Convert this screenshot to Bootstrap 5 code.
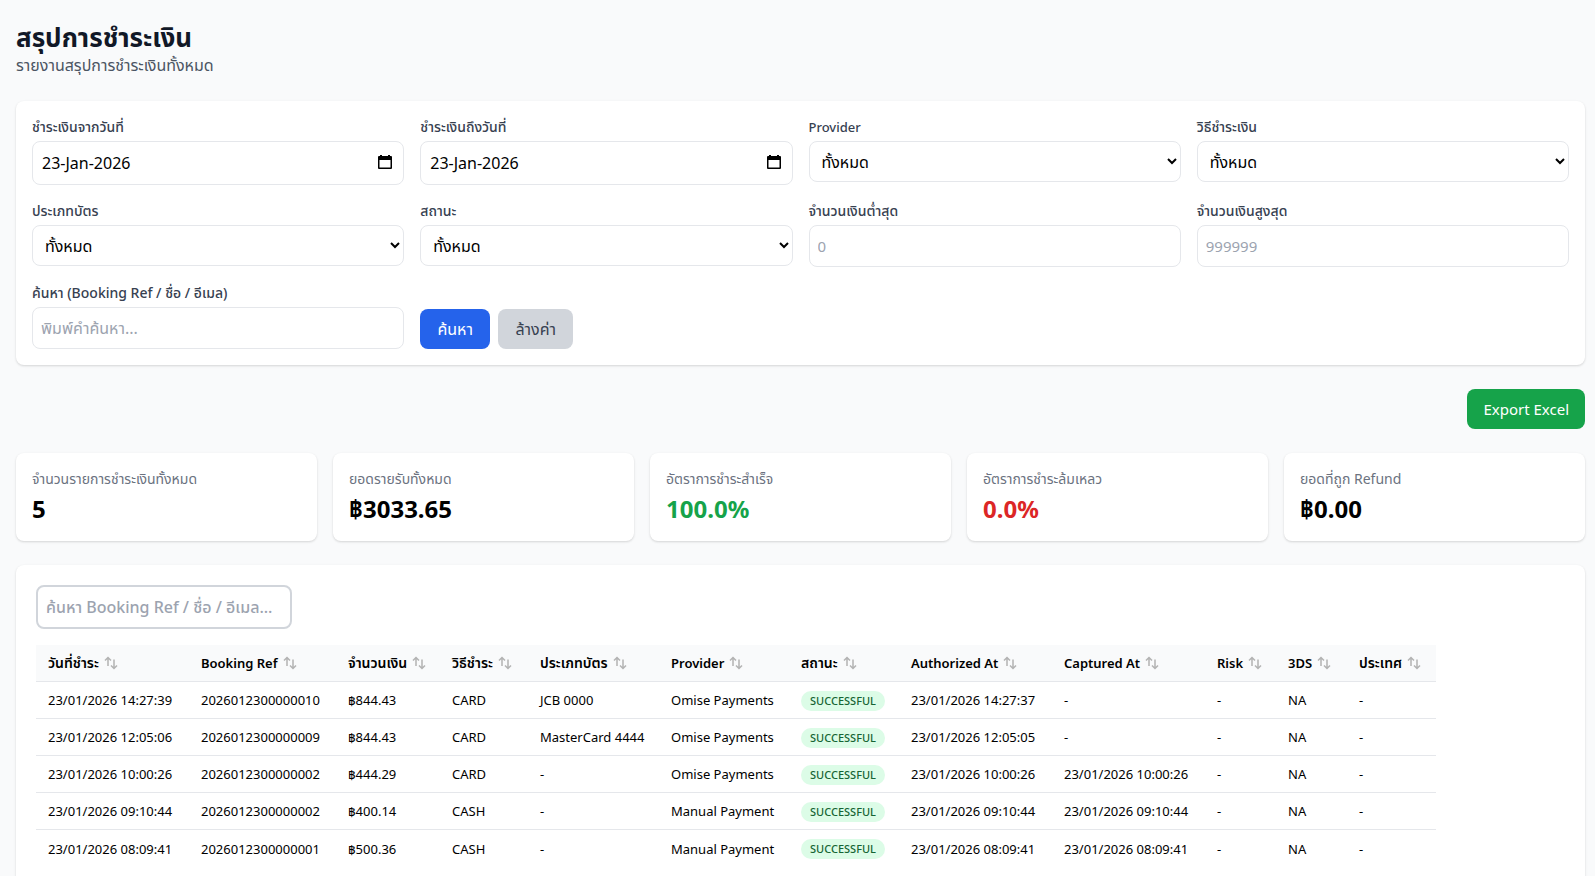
<!DOCTYPE html>
<html lang="th">
<head>
<meta charset="utf-8">
<meta name="viewport" content="width=device-width, initial-scale=1">
<title>สรุปการชำระเงิน</title>
<link href="https://cdn.jsdelivr.net/npm/bootstrap@5.3.0/dist/css/bootstrap.min.css" rel="stylesheet">
<style>
  body { background: #f9fafb; color: #000; font-family: "Noto Sans", "Noto Sans Thai", "Leelawadee UI", sans-serif; font-size: 16px; line-height: 24px; }
  .page { padding: 21px 10px 24px 16px; }
  .page-title { font-size: 26px; line-height: 32px; font-weight: 700; color: #111827; }
  .page-sub { color: #4b5563; }
  .panel { background: #fff; border-radius: 8px; box-shadow: 0 1px 3px rgba(0,0,0,.1), 0 1px 2px rgba(0,0,0,.06); }
  .filters { display: grid; grid-template-columns: repeat(4, minmax(0, 1fr)); gap: 16px; }
  .filters label { display: block; font-size: 14px; line-height: 20px; font-weight: 500; color: #374151; margin-bottom: 4px; }
  .filters .latin, .pay .latin { font-size: 13px; }
  .field { display: block; width: 100%; height: 42px; padding: 8px; border: 1px solid #e5e7eb; border-radius: 8px; background-color: #fff; color: #000; }
  select.field { height: 41px; }
  .field[type="number"] { font-size: 15px; }
  .field-date { height: 44px; padding-left: 9px; }
  .date-icon { position: absolute; right: 12px; top: 14px; pointer-events: none; }
  .field::placeholder, .quick::placeholder { color: #9ca3af; opacity: 1; }
  .act { height: 40px; min-width: 70px; padding: 8px 16px; border: 0; border-radius: 8px; font-size: 16px; line-height: 24px; }
  .act-search { background: #2563eb; color: #fff; }
  .act-clear { min-width: 75px; background: #d1d5db; color: #374151; }
  .act-export { background: #16a34a; color: #fff; font-size: 15px; }
  .stats { display: grid; grid-template-columns: repeat(5, minmax(0, 1fr)); gap: 16px; }
  .stat-label { font-size: 14px; line-height: 20px; color: #6b7280; }
  .stat-value { font-size: 24px; line-height: 32px; font-weight: 700; margin-top: 4px; }
  .good { color: #16a34a; }
  .bad { color: #dc2626; }
  .sheet { padding: 20px; }
  .quick { display: block; width: 256px; height: 44px; padding: 8px; border: 2px solid #d1d5db; border-radius: 8px; font-weight: 500; margin-bottom: 16px; }
  .pay { table-layout: fixed; width: 1400px; border-collapse: separate; border-spacing: 0; font-size: 13px; line-height: 20px; }
  .pay th, .pay td { height: 37px; padding: 0 12px; vertical-align: middle; white-space: nowrap; border-bottom: 1px solid #e5e7eb; }
  .pay th { background: #f9fafb; font-size: 14px; font-weight: 600; }
  .pay tr:last-child td { border-bottom: 0; }
  .pay th svg { width: 14px; height: 14px; margin-left: 5px; vertical-align: -2px; fill: none; stroke: #b3b3b3; stroke-width: 1.5; }
  .pay .state { display: inline-block; height: 20px; padding: 0 8px; border-radius: 10px; background: #dcfce7; color: #166534; font-size: 11px; line-height: 20px; font-weight: 500; vertical-align: middle; min-width: 84px; text-align: center; }
</style>
</head>
<body>
<svg class="d-none" aria-hidden="true">
  <symbol id="sort" viewBox="0 0 14 14"><path d="M4 10V1.500M1 4.500l3-3 3 3M10 3.500v9M7 9.500l3 3 3-3"/></symbol>
  <symbol id="cal" viewBox="0 0 14 15"><path d="M2 0h2v1h6V0h2v1h1a1 1 0 0 1 1 1v11a1 1 0 0 1-1 1H1a1 1 0 0 1-1-1V2a1 1 0 0 1 1-1h1zM1.500 5v7.500h11V5z" fill="#000" fill-rule="evenodd"/></symbol>
</svg>
<main class="page">
  <header class="mb-4">
    <h1 class="page-title mb-0">สรุปการชำระเงิน</h1>
    <p class="page-sub mb-0">รายงานสรุปการชำระเงินทั้งหมด</p>
  </header>

  <form class="panel filters p-3 mb-4">
    <div>
      <label for="from">ชำระเงินจากวันที่</label>
      <div class="position-relative"><input class="field field-date" id="from" type="text" value="23-Jan-2026"><svg class="date-icon" width="14" height="15"><use href="#cal"/></svg></div>
    </div>
    <div>
      <label for="to">ชำระเงินถึงวันที่</label>
      <div class="position-relative"><input class="field field-date" id="to" type="text" value="23-Jan-2026"><svg class="date-icon" width="14" height="15"><use href="#cal"/></svg></div>
    </div>
    <div><label class="latin" for="provider">Provider</label><select class="field" id="provider"><option>ทั้งหมด</option></select></div>
    <div><label for="method">วิธีชำระเงิน</label><select class="field" id="method"><option>ทั้งหมด</option></select></div>
    <div><label for="cardtype">ประเภทบัตร</label><select class="field" id="cardtype"><option>ทั้งหมด</option></select></div>
    <div><label for="status">สถานะ</label><select class="field" id="status"><option>ทั้งหมด</option></select></div>
    <div><label for="min">จำนวนเงินต่ำสุด</label><input class="field" id="min" type="number" placeholder="0"></div>
    <div><label for="max">จำนวนเงินสูงสุด</label><input class="field" id="max" type="number" placeholder="999999"></div>
    <div><label for="term">ค้นหา (Booking Ref / ชื่อ / อีเมล)</label><input class="field" id="term" type="text" placeholder="พิมพ์คำค้นหา..."></div>
    <div class="d-flex align-items-end gap-2">
      <button class="act act-search" type="button">ค้นหา</button>
      <button class="act act-clear" type="button">ล้างค่า</button>
    </div>
  </form>

  <div class="d-flex justify-content-end mb-4"><button class="act act-export" type="button">Export Excel</button></div>

  <section class="stats mb-4">
    <div class="panel p-3"><div class="stat-label">จำนวนรายการชำระเงินทั้งหมด</div><div class="stat-value">5</div></div>
    <div class="panel p-3"><div class="stat-label">ยอดรายรับทั้งหมด</div><div class="stat-value">฿3033.65</div></div>
    <div class="panel p-3"><div class="stat-label">อัตราการชำระสำเร็จ</div><div class="stat-value good">100.0%</div></div>
    <div class="panel p-3"><div class="stat-label">อัตราการชำระล้มเหลว</div><div class="stat-value bad">0.0%</div></div>
    <div class="panel p-3"><div class="stat-label">ยอดที่ถูก Refund</div><div class="stat-value">฿0.00</div></div>
  </section>

  <section class="panel sheet">
    <input class="quick" type="text" aria-label="ค้นหา" placeholder="ค้นหา Booking Ref / ชื่อ / อีเมล...">
    <div class="overflow-x-auto">
    <table class="pay">
      <colgroup><col width="153"><col width="147"><col width="104"><col width="88"><col width="131"><col width="130"><col width="110"><col width="153"><col width="153"><col width="71"><col width="71"><col width="89"></colgroup>
      <thead>
        <tr>
          <th>วันที่ชำระ<svg><use href="#sort"/></svg></th><th class="latin">Booking Ref<svg><use href="#sort"/></svg></th><th>จำนวนเงิน<svg><use href="#sort"/></svg></th><th>วิธีชำระ<svg><use href="#sort"/></svg></th><th>ประเภทบัตร<svg><use href="#sort"/></svg></th><th class="latin">Provider<svg><use href="#sort"/></svg></th><th>สถานะ<svg><use href="#sort"/></svg></th><th class="latin">Authorized At<svg><use href="#sort"/></svg></th><th class="latin">Captured At<svg><use href="#sort"/></svg></th><th class="latin">Risk<svg><use href="#sort"/></svg></th><th class="latin">3DS<svg><use href="#sort"/></svg></th><th>ประเทศ<svg><use href="#sort"/></svg></th>
        </tr>
      </thead>
      <tbody>
        <tr><td>23/01/2026 14:27:39</td><td>2026012300000010</td><td>฿844.43</td><td>CARD</td><td>JCB 0000</td><td>Omise Payments</td><td><span class="state">SUCCESSFUL</span></td><td>23/01/2026 14:27:37</td><td>-</td><td>-</td><td>NA</td><td>-</td></tr>
        <tr><td>23/01/2026 12:05:06</td><td>2026012300000009</td><td>฿844.43</td><td>CARD</td><td>MasterCard 4444</td><td>Omise Payments</td><td><span class="state">SUCCESSFUL</span></td><td>23/01/2026 12:05:05</td><td>-</td><td>-</td><td>NA</td><td>-</td></tr>
        <tr><td>23/01/2026 10:00:26</td><td>2026012300000002</td><td>฿444.29</td><td>CARD</td><td>-</td><td>Omise Payments</td><td><span class="state">SUCCESSFUL</span></td><td>23/01/2026 10:00:26</td><td>23/01/2026 10:00:26</td><td>-</td><td>NA</td><td>-</td></tr>
        <tr><td>23/01/2026 09:10:44</td><td>2026012300000002</td><td>฿400.14</td><td>CASH</td><td>-</td><td>Manual Payment</td><td><span class="state">SUCCESSFUL</span></td><td>23/01/2026 09:10:44</td><td>23/01/2026 09:10:44</td><td>-</td><td>NA</td><td>-</td></tr>
        <tr><td>23/01/2026 08:09:41</td><td>2026012300000001</td><td>฿500.36</td><td>CASH</td><td>-</td><td>Manual Payment</td><td><span class="state">SUCCESSFUL</span></td><td>23/01/2026 08:09:41</td><td>23/01/2026 08:09:41</td><td>-</td><td>NA</td><td>-</td></tr>
      </tbody>
    </table>
    </div>
  </section>
</main>
<script src="https://cdn.jsdelivr.net/npm/bootstrap@5.3.0/dist/js/bootstrap.bundle.min.js"></script>
</body>
</html>
